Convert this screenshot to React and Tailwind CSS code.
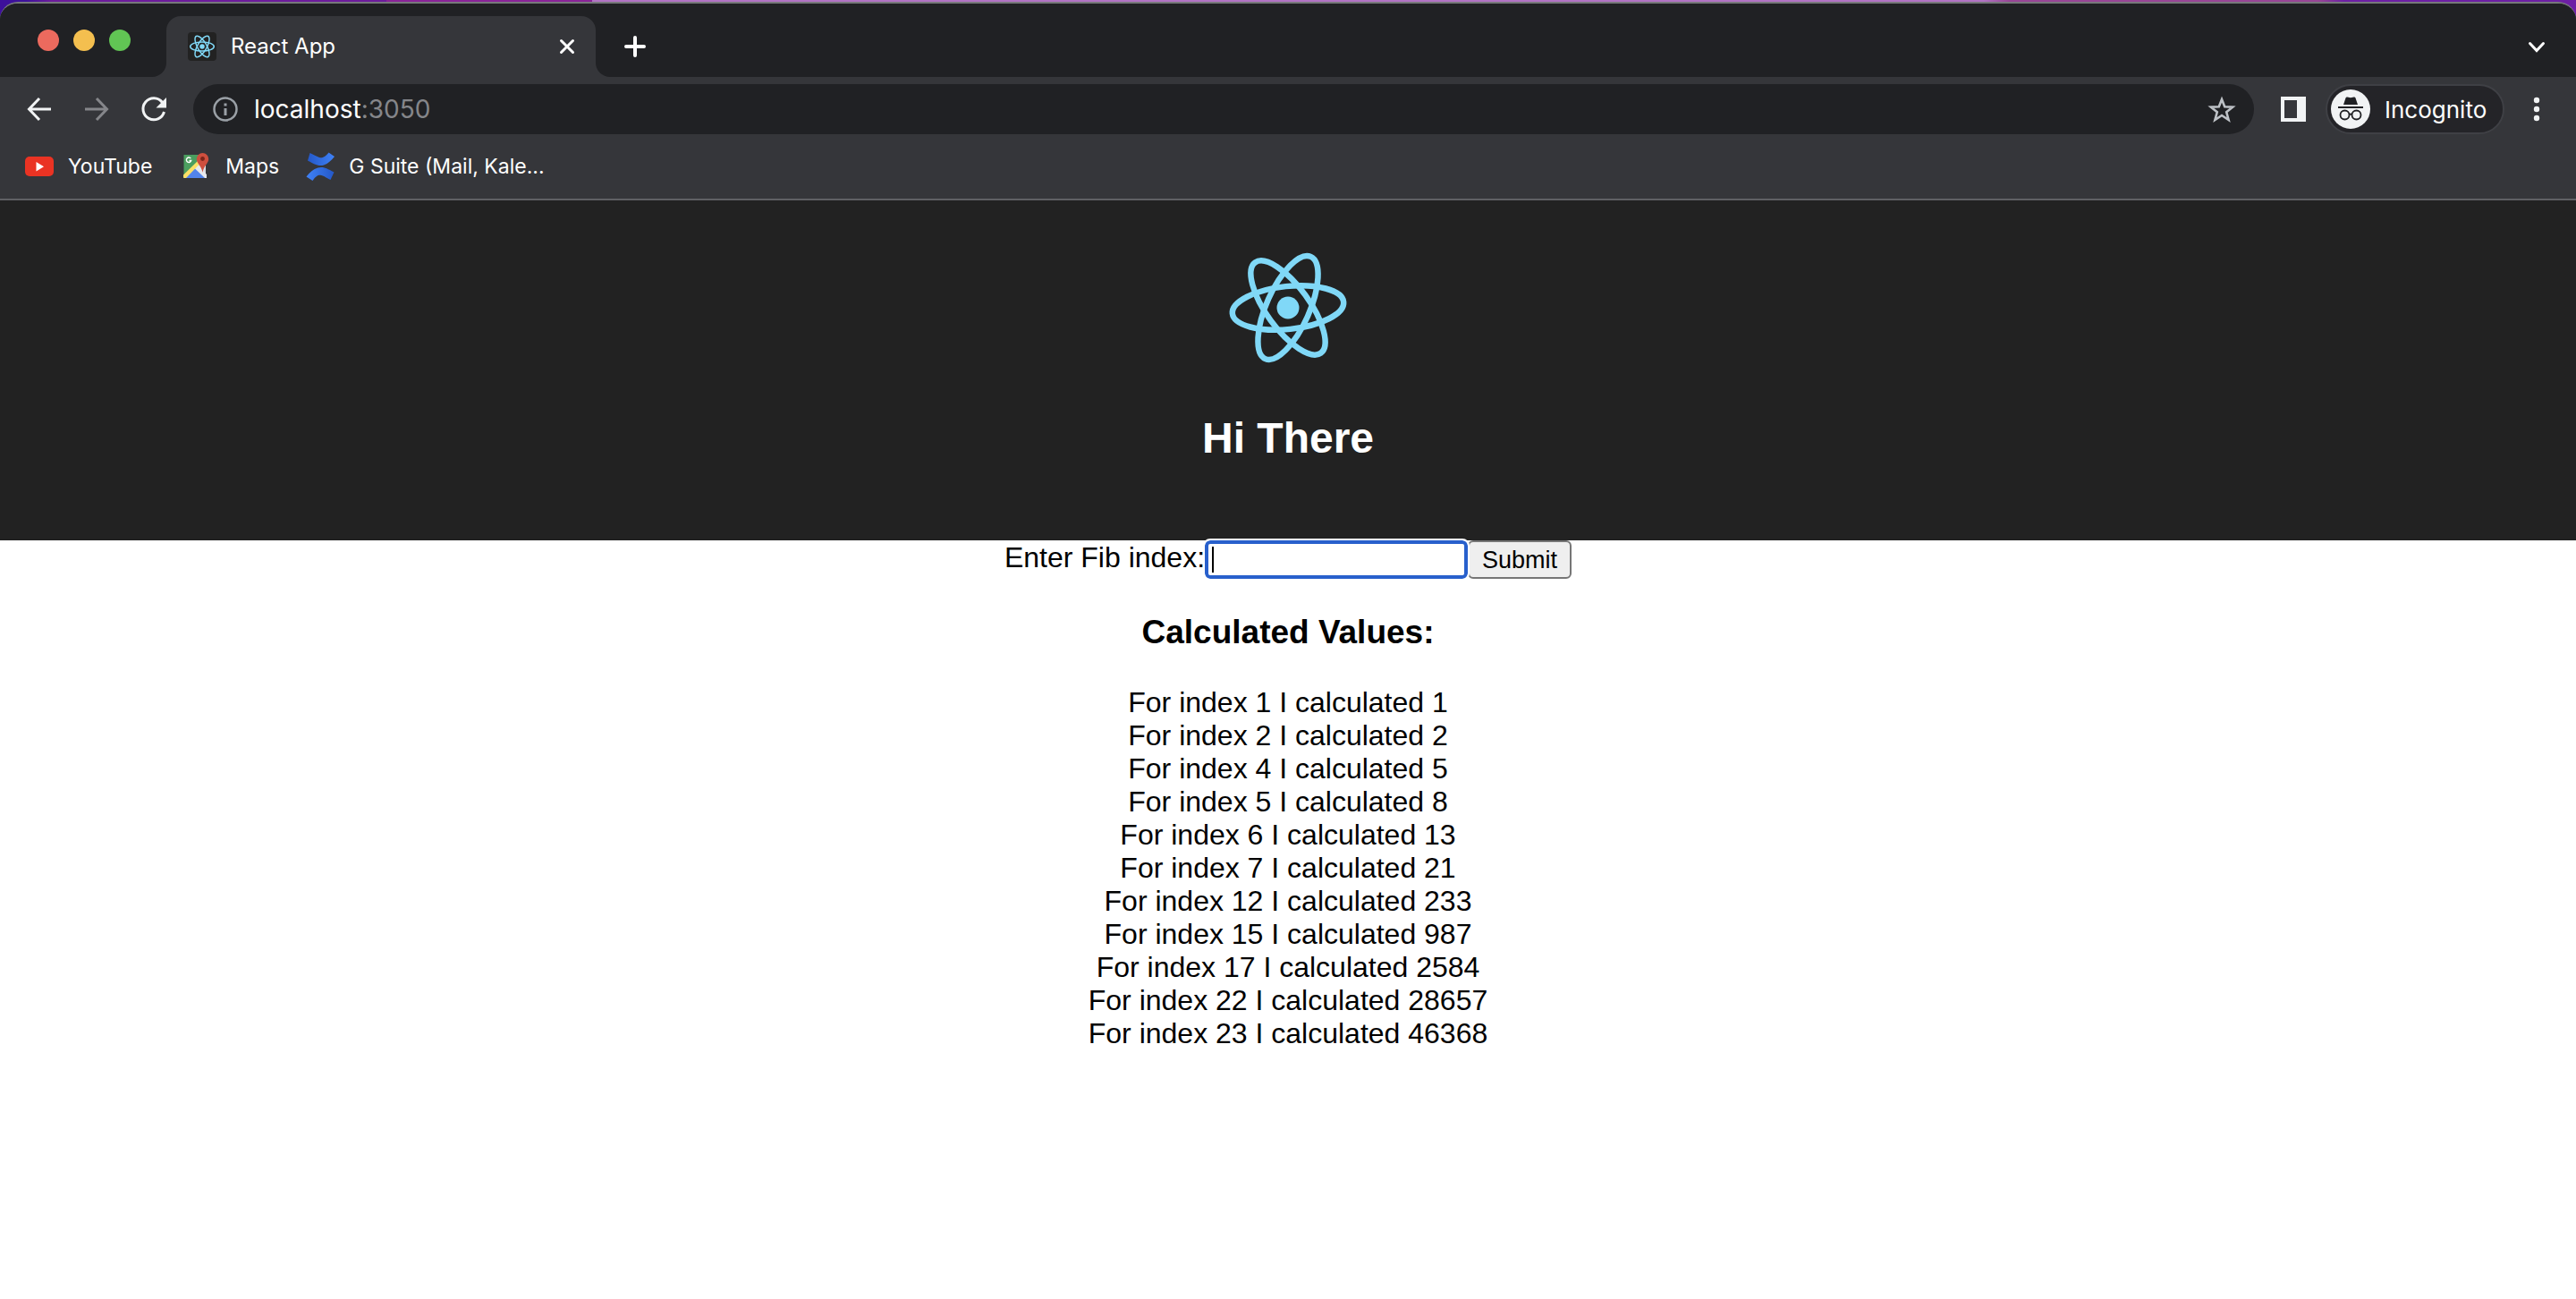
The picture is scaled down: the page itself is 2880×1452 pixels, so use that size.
import { useEffect, useRef } from "react";

const results = [
  [1, 1], [2, 2], [4, 5], [5, 8], [6, 13], [7, 21],
  [12, 233], [15, 987], [17, 2584], [22, 28657], [23, 46368],
];

function Atom({ className, tilt, stroke, dot }) {
  return (
    <svg className={className} viewBox="-80 -80 160 160" fill="none" stroke="#80d8f7" strokeWidth={stroke} aria-hidden="true">
      <g transform={`rotate(${tilt})`}>
        <ellipse rx="62.5" ry="24" />
        <ellipse rx="62.5" ry="24" transform="rotate(60)" />
        <ellipse rx="62.5" ry="24" transform="rotate(120)" />
      </g>
      <circle r={dot} fill="#80d8f7" stroke="none" />
    </svg>
  );
}

function TabStrip() {
  return (
    <div className="flex h-[82px] bg-[#35363a]">
      <div className="flex w-[186px] shrink-0 gap-4 rounded-br-2xl bg-[#202124] pt-[29px] pl-[42px]">
        <button aria-label="Close window" className="size-6 rounded-full bg-[#ec6a5e]" />
        <button aria-label="Minimise window" className="size-6 rounded-full bg-[#f4bf4f]" />
        <button aria-label="Zoom window" className="size-6 rounded-full bg-[#61c554]" />
      </div>
      <div className="w-[480px] shrink-0 bg-[#202124] pt-[14px]">
        <div className="flex h-[68px] items-center rounded-t-2xl bg-[#35363a] pr-5 pl-6">
          <span className="flex size-8 items-center justify-center rounded bg-[#222]">
            <Atom className="size-[34px] shrink-0" tilt={0} stroke="7" dot="13" />
          </span>
          <span className="ml-4 flex-1 text-2xl text-white">React App</span>
          <button aria-label="Close tab" className="text-white">
            <svg className="size-6" viewBox="0 0 24 24" stroke="currentColor" strokeWidth="3" strokeLinecap="round" aria-hidden="true">
              <path d="M5.5 5.5l13 13M18.5 5.5l-13 13" />
            </svg>
          </button>
        </div>
      </div>
      <div className="flex flex-1 items-center justify-between rounded-bl-2xl bg-[#202124] pt-[14px] pr-8 pl-8 text-white">
        <button aria-label="New tab">
          <svg className="size-6" viewBox="0 0 24 24" stroke="currentColor" strokeWidth="4" strokeLinecap="round" aria-hidden="true">
            <path d="M12 2v20M2 12h20" />
          </svg>
        </button>
        <button aria-label="Search tabs">
          <svg className="size-6" viewBox="0 0 24 24" fill="none" stroke="currentColor" strokeWidth="3" strokeLinecap="round" aria-hidden="true">
            <path d="M4.5 8.5l7.5 8 7.5-8" />
          </svg>
        </button>
      </div>
    </div>
  );
}

function Toolbar() {
  return (
    <div className="flex h-[72px] items-center pr-[30px] pl-7 text-[#f1f3f4]">
      <button aria-label="Back">
        <svg className="size-8" viewBox="0 0 32 32" fill="none" stroke="currentColor" strokeWidth="3" aria-hidden="true">
          <path d="M29 16H5M16 4L4.5 16 16 28" />
        </svg>
      </button>
      <button aria-label="Forward" className="ml-8 text-[#85868a]">
        <svg className="size-8" viewBox="0 0 32 32" fill="none" stroke="currentColor" strokeWidth="3" aria-hidden="true">
          <path d="M3 16h24M16 4l11.5 12L16 28" />
        </svg>
      </button>
      <button aria-label="Reload" className="ml-8">
        <svg className="size-8" viewBox="0 0 32 32" fill="none" aria-hidden="true">
          <path d="M25.5 8.500A12 12 0 1 0 27.5 19" stroke="currentColor" strokeWidth="3" />
          <path d="M30 3v11.5H18.5z" fill="currentColor" />
        </svg>
      </button>
      <div className="ml-7 flex h-14 flex-1 items-center rounded-full bg-[#202124] pr-5 pl-[22px]">
        <button aria-label="Site information" className="text-[#9aa0a6]">
          <svg className="size-7" viewBox="0 0 28 28" fill="none" stroke="currentColor" strokeWidth="3" aria-hidden="true">
            <circle cx="14" cy="14" r="12.5" strokeWidth="2.5" />
            <path d="M14 13v8M14 7.5v3" />
          </svg>
        </button>
        <div className="ml-[18px] flex-1 text-[28px] text-white">
          localhost<span className="text-[#85868a]">:3050</span>
        </div>
        <button aria-label="Bookmark this tab" className="text-[#bdc1c6]">
          <svg className="size-8" viewBox="0 0 32 32" fill="none" stroke="currentColor" strokeWidth="2.6" aria-hidden="true">
            <path d="M16 5l3.200 8.200 9 .5-7 5.600 2.400 8.700-7.600-5-7.600 5 2.400-8.700-7-5.600 9-.5z" />
          </svg>
        </button>
      </div>
      <button aria-label="Side panel" className="ml-[30px]">
        <svg className="size-7" viewBox="0 0 28 28" fill="currentColor" aria-hidden="true">
          <path fillRule="evenodd" d="M0 0h28v28H0zM4 4v20h14V4z" />
        </svg>
      </button>
      <button className="ml-[22px] flex h-14 w-[200px] items-center rounded-full border-2 border-[#3f4045] bg-[#242428] pl-1">
        <svg className="size-11" viewBox="0 0 44 44" aria-hidden="true">
          <circle cx="22" cy="22" r="22" fill="#f1f3f4" />
          <g fill="#202124">
            <path d="M14 17l2.500-7.500q.5-1.500 2-1l3.500.8 3.500-.8q1.500-.5 2 1L30 17z" />
            <path d="M8 19h28v2H8z" />
          </g>
          <g fill="none" stroke="#202124" strokeWidth="1.8">
            <circle cx="15.5" cy="28.5" r="5" />
            <circle cx="28.5" cy="28.5" r="5" />
            <path d="M20.500 28q1.500-1 3 0" />
          </g>
        </svg>
        <span className="ml-4 text-[26px] text-white">Incognito</span>
      </button>
      <button aria-label="Menu" className="ml-[22px]">
        <svg className="size-7" viewBox="0 0 28 28" fill="currentColor" aria-hidden="true">
          <circle cx="14" cy="4" r="3.2" />
          <circle cx="14" cy="14" r="3.2" />
          <circle cx="14" cy="24" r="3.2" />
        </svg>
      </button>
    </div>
  );
}

function Bookmarks() {
  return (
    <nav aria-label="Bookmarks" className="flex h-14 items-center pl-7 text-[23px] text-white">
      <a href="#youtube" className="flex items-center gap-4">
        <svg className="size-8" viewBox="0 0 32 32" aria-hidden="true">
          <rect y="5" width="32" height="22" rx="5" fill="#ea3323" />
          <path d="M12.500 11v10.500l8.500-5.250z" fill="#fff" />
        </svg>
        YouTube
      </a>
      <a href="#maps" className="ml-[34px] flex items-center gap-4">
        <svg className="size-8" viewBox="0 0 32 32" aria-hidden="true">
          <path d="M1.500 3h24v26h-24z" fill="#4b9e5f" />
          <path d="M14 16l12-8v21L16 19z" fill="#dadce0" />
          <path d="M3 29l11.500-12L26 29z" fill="#5284ec" />
          <path d="M13.500 18L25 29h2V25L17 14z" fill="#e8eaed" />
          <path d="M1 25.500L17 10l1.500 4L4 29H2q-1 0-1-1z" fill="#fbe067" />
          <path d="M22.500 1a6.700 6.700 0 0 1 6.700 6.700c0 5-5.200 7-6.700 15-1.500-8-6.700-10-6.700-15A6.700 6.700 0 0 1 22.500 1z" fill="#ce4f3e" />
          <circle cx="22.5" cy="7.5" r="2.4" fill="#7a2519" />
          <path d="M9.300 7.200A2.700 2.700 0 1 0 9.700 9.500H7.500" fill="none" stroke="#fff" strokeWidth="1.4" />
        </svg>
        Maps
      </a>
      <a href="#gsuite" className="ml-[30px] flex items-center gap-4">
        <svg className="size-8" viewBox="0 0 32 32" aria-hidden="true">
          <defs>
            <linearGradient id="waveTop" x1="0" x2="1">
              <stop offset="0" stopColor="#2458c8" />
              <stop offset="1" stopColor="#3f82f7" />
            </linearGradient>
            <linearGradient id="waveBottom" x1="1" x2="0">
              <stop offset="0" stopColor="#2458c8" />
              <stop offset="1" stopColor="#3f82f7" />
            </linearGradient>
          </defs>
          <path d="M4.500 1L2 9.500c9 5 13 6.500 18 5 5-1.700 8-5 12-9.500L25.500.5C21 6 18 7 15 6 11 4.500 8 2.500 4.500 1z" fill="url(#waveTop)" />
          <path d="M27.500 31l4-8.500c-9-5-13-6.500-18-5C8 19 4.500 22.500.5 27.500l7 4.500c4-6 7-7 10-6 4 1.300 6.500 3.500 10 5z" fill="url(#waveBottom)" />
        </svg>
        G Suite (Mail, Kale...
      </a>
    </nav>
  );
}

export default function App() {
  const input = useRef(null);
  useEffect(() => input.current?.focus(), []);
  return (
    <div className="min-h-screen bg-[linear-gradient(to_right,#3d109b_1%,#6d1b9c_2%,#6d1b9c_15%,#8a2398_15%,#8a2398_23%,#b273c4_23%,#b273c4_77%,#984596_78%,#984596_90%,#6d1fa5_91%)] pt-[2px]">
      <div className="flex min-h-[calc(100vh-2px)] flex-col overflow-hidden rounded-t-[20px] border-t-2 border-[#77787b] bg-white">
        <header className="border-b-2 border-[#5f6064] bg-[#35363a] pb-2 font-[Inter,sans-serif]">
          <TabStrip />
          <Toolbar />
          <Bookmarks />
        </header>
        <main className="text-center font-['Liberation_Sans',Arial,sans-serif] text-[32px] leading-[37px] text-black">
          <div className="h-[380px] bg-[#222] pt-10 text-white">
            <Atom className="mx-auto size-40" tilt={-6} stroke="6.5" dot="12.5" />
            <h1 className="mt-[38px] text-5xl leading-[55px] font-bold">Hi There</h1>
          </div>
          <form className="flex items-start justify-center" onSubmit={(e) => e.preventDefault()}>
            <label htmlFor="fib" className="pt-px">Enter Fib index:</label>
            <div className="relative">
              <input
                id="fib"
                ref={input}
                type="text"
                className="block h-[43px] w-[294px] rounded-md border-4 border-[#2860cc] bg-white px-1 text-[27px] caret-transparent outline-2 outline-white"
              />
              <span className="pointer-events-none absolute inset-y-[7px] left-2 w-[2px] bg-black" />
            </div>
            <button type="submit" className="h-[43px] rounded-md border-2 border-[#767676] bg-[#efefef] px-[14px] text-[27px] leading-[38px]">
              Submit
            </button>
          </form>
          <h2 className="mt-[39px] text-[37px] leading-[42px] font-bold">Calculated Values:</h2>
          <ul className="mt-[39px]">
            {results.map(([index, value]) => (
              <li key={index}>For index {index} I calculated {value}</li>
            ))}
          </ul>
        </main>
      </div>
    </div>
  );
}
